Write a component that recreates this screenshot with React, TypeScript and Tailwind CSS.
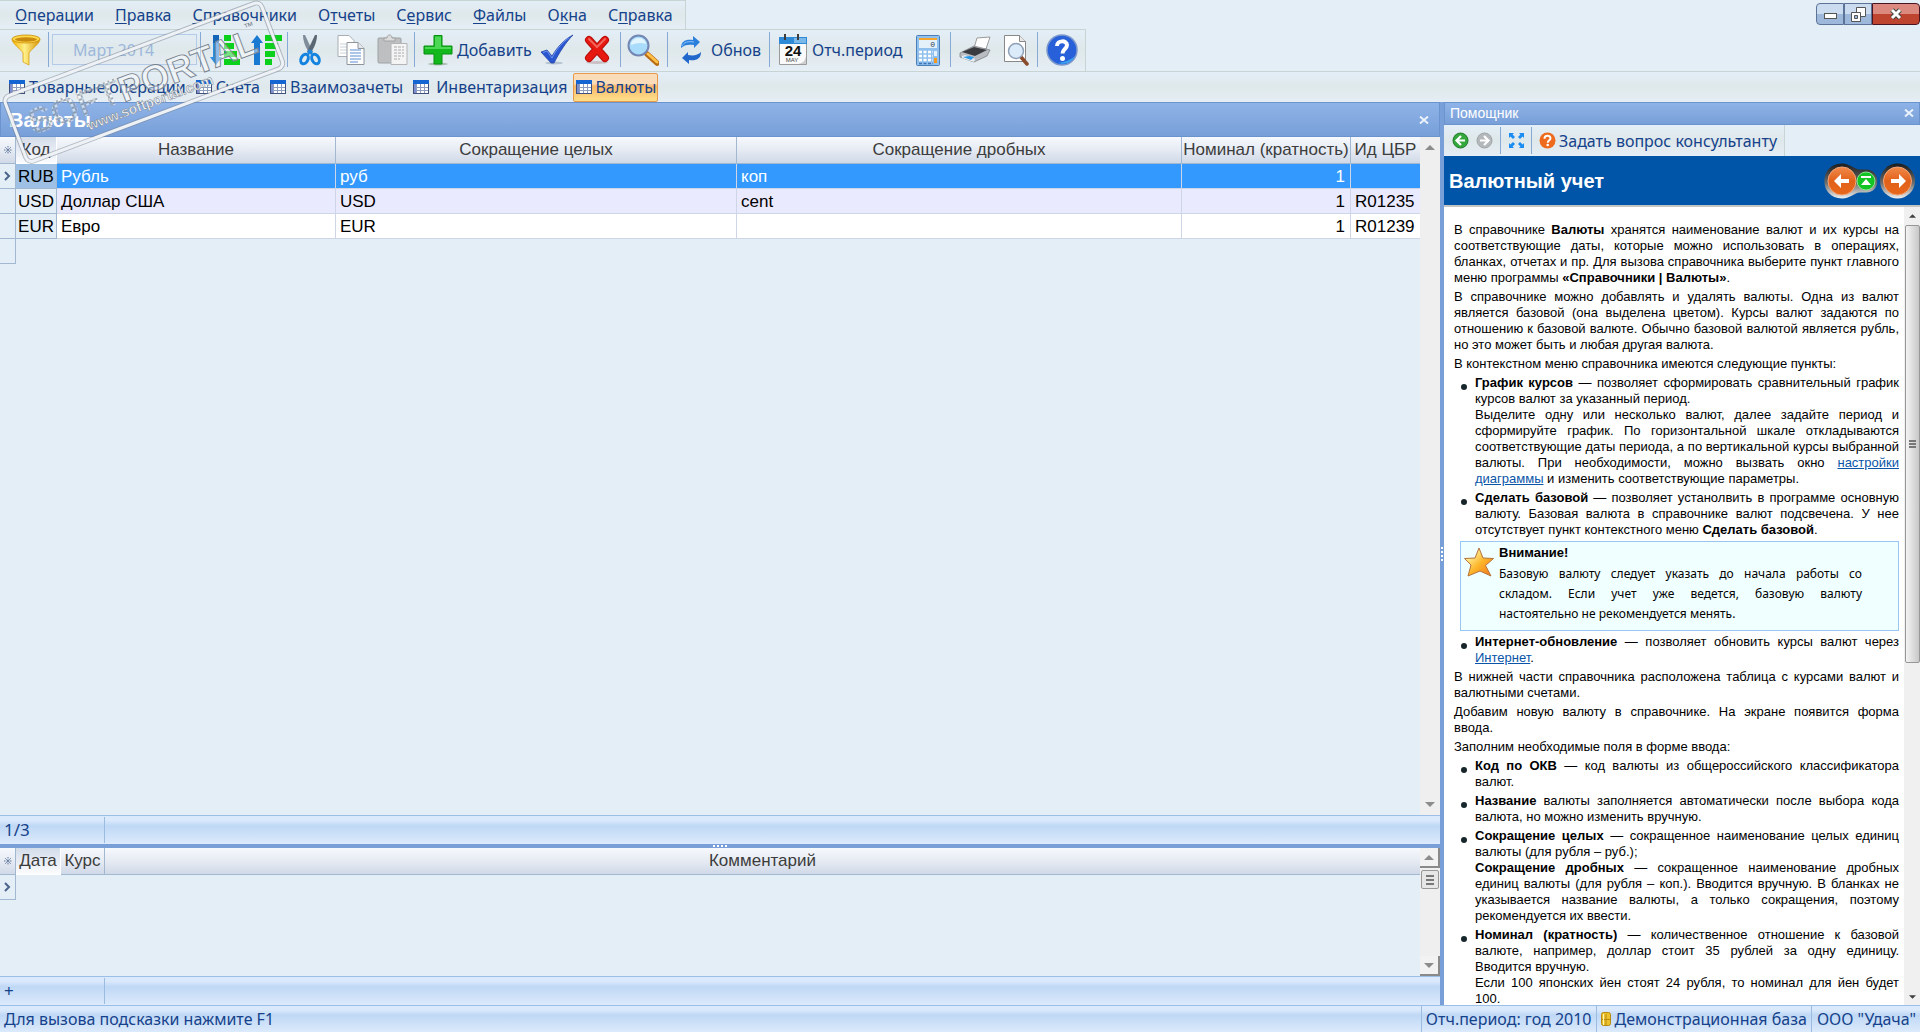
import React from "react";

type IconProps = { className?: string };

const BAR = "bg-linear-to-b from-[#e3eef7] via-[#dfe8ea] to-[#e6eef6]";
const HEAD = "bg-linear-to-b from-[#f6f9fd] via-[#e6ebf3] to-[#d0d9e8]";
const FOOT = "bg-linear-to-b from-[#dbe9fc] from-15% via-[#bfd8f5] via-35% to-[#dceafc]";
const TITLE = "border border-[#6b94cf] bg-linear-to-b from-[#8eb3e8] to-[#789fd8]";

const menu = [
  ["", "О", "перации"],
  ["", "П", "равка"],
  ["", "С", "правочники"],
  ["О", "т", "четы"],
  ["С", "е", "рвис"],
  ["", "Ф", "айлы"],
  ["О", "к", "на"],
  ["С", "п", "равка"],
];

const tabs = ["Товарные операции", "Счета", "Взаимозачеты", "Инвентаризация", "Валюты"];

const currencies = [
  { code: "RUB", name: "Рубль", whole: "руб", part: "коп", nominal: 1, id: "" },
  { code: "USD", name: "Доллар США", whole: "USD", part: "cent", nominal: 1, id: "R01235" },
  { code: "EUR", name: "Евро", whole: "EUR", part: "", nominal: 1, id: "R01239" },
];

const FunnelIcon = () => (
  <svg width="30" height="32" viewBox="0 0 30 32">
    <defs>
      <linearGradient id="gold" x1="0" x2="1">
        <stop offset="0" stopColor="#f5b100" />
        <stop offset=".45" stopColor="#fff08a" />
        <stop offset="1" stopColor="#d89400" />
      </linearGradient>
    </defs>
    <path d="M1 5c0 5 9 10 11 14v9l6 3V19c2-4 11-9 11-14z" fill="url(#gold)" stroke="#d99a00" strokeWidth=".7" />
    <ellipse cx="15" cy="5" rx="14" ry="4" fill="#ffd84a" stroke="#c98c00" strokeWidth=".8" />
    <ellipse cx="15" cy="5.500" rx="11" ry="2.200" fill="#c98a10" />
  </svg>
);

const SortDownIcon = () => (
  <svg width="32" height="32" viewBox="0 0 32 32">
    <path d="M4 1h6v22h3L7 31 1 23h3z" fill="#2f8be0" />
    <path d="M4 1h6v8H4z" fill="#1565b8" />
    <path d="M15 1h7v6h-7zM15 9h10v6H15zM15 17h13v6H15zM15 25h16v6H15z" fill="#0bd01c" />
  </svg>
);

const SortUpIcon = () => (
  <svg width="34" height="32" viewBox="0 0 34 32">
    <path d="M5 31h6V9h3L8 1 2 9h3z" fill="#1a7ad2" />
    <path d="M16 1h17v6H16zM16 9h13v6H16zM16 17h10v6H16zM16 25h7v6h-7z" fill="#0bd01c" />
  </svg>
);

const CutIcon = () => (
  <svg width="24" height="32" viewBox="0 0 24 32" fill="none">
    <path d="M5 1l2 0 8 17-3 2C8 14 5 8 5 1z" fill="#7f8c99" />
    <path d="M19 1l-2 0-8 17 3 2c4-6 7-12 7-19z" fill="#5a6672" />
    <circle cx="12" cy="18" r="2.500" fill="#1c86e0" />
    <ellipse cx="6.500" cy="25" rx="3.500" ry="5" transform="rotate(25 6.500 25)" stroke="#1483e0" strokeWidth="3" />
    <ellipse cx="17.500" cy="25" rx="3.500" ry="5" transform="rotate(-25 17.500 25)" stroke="#1483e0" strokeWidth="3" />
  </svg>
);

const CopyIcon = () => (
  <svg width="30" height="32" viewBox="0 0 30 32">
    <path d="M2 1.500h11l5 5v16H2z" fill="#fff" stroke="#a8aeb4" />
    <path d="M4 10h8M4 13h8M4 16h8M4 19h8" stroke="#ccd2d8" />
    <path d="M11 8.500h11l6 6v16H11z" fill="#fdfdfd" stroke="#8e959c" />
    <path d="M22 8.500v6h6" fill="#e4e8ec" stroke="#8e959c" />
    <path d="M14 16h11M14 19h11M14 22h11M14 25h11M14 28h8" stroke="#5b8fd6" />
  </svg>
);

const PasteIcon = () => (
  <svg width="32" height="32" viewBox="0 0 32 32">
    <rect x="1" y="4" width="23" height="25" rx="1" fill="#bdbfc1" stroke="#9fa2a4" />
    <path d="M7 7V4h3c0-4 5-4 5 0h3v3z" fill="#dcdcdc" stroke="#9fa2a4" />
    <path d="M14 9.500h16v21H14z" fill="#f4f4f4" stroke="#b2b4b6" />
    <path d="M17 13h10M17 16h10M17 19h10M17 22h10M17 25h6" stroke="#a8aaac" strokeDasharray="3 1" />
  </svg>
);

const AddIcon = () => (
  <svg width="30" height="32" viewBox="0 0 30 32">
    <ellipse cx="15" cy="30" rx="10" ry="1.500" fill="#a9bdb4" />
    <path d="M11 1.500h8V12h10v8H19v10h-8V20H1v-8h10z" fill="#12b81c" stroke="#078f10" />
    <path d="M12 2.500h6V13h10v2H2v-2h10z" fill="#4cd854" />
  </svg>
);

const CheckIcon = () => (
  <svg width="34" height="32" viewBox="0 0 34 32">
    <ellipse cx="14" cy="29" rx="9" ry="1.500" fill="#b4c2d2" />
    <path d="M1 18l6-2 5 6C18 12 25 5 33 1c-7 7-14 18-19 28h-3z" fill="#2a56d0" stroke="#1a3aa0" strokeWidth=".7" />
    <path d="M3 18.500l4-1.500 5 7C17 14 24 7 29 4" fill="none" stroke="#6f95ee" />
  </svg>
);

const DeleteIcon = () => (
  <svg width="28" height="30" viewBox="0 0 28 30">
    <ellipse cx="14" cy="27.500" rx="11" ry="1.500" fill="#c9bfc4" />
    <path d="M6 5l16 18M22 5L6 23" stroke="#b80f0a" strokeWidth="8" strokeLinecap="round" />
    <path d="M6 5l16 18M22 5L6 23" stroke="#e61810" strokeWidth="6" strokeLinecap="round" />
    <path d="M6 4l8 8 8-8" fill="none" stroke="#f2655a" strokeWidth="2" strokeLinecap="round" />
  </svg>
);

const FindIcon = () => (
  <svg width="32" height="32" viewBox="0 0 32 32">
    <path d="M20 20l10 9" stroke="#b86a10" strokeWidth="5.500" strokeLinecap="round" />
    <path d="M21 20l9 8" stroke="#ffc04a" strokeWidth="3" strokeLinecap="round" />
    <circle cx="11.500" cy="11.500" r="10" fill="#a9dcfa" stroke="#7487b4" strokeWidth="2" />
    <path d="M4 11c0-9 14-9 15-1-5-2-10-1-15 1z" fill="#e2f5ff" />
  </svg>
);

const RefreshIcon = () => (
  <svg width="24" height="28" viewBox="0 0 24 28">
    <path d="M2 12C2 5 7 3 14 4V0l7 6-6 6V9C9 8 5 9 2 12z" fill="#2b7fdc" />
    <path d="M22 16c0 7-5 9-12 8v4l-7-6 6-6v3c6 1 10 0 13-3z" fill="#2268cc" />
    <path d="M3 10c2-4 6-5 12-4" stroke="#8cc4fa" fill="none" />
  </svg>
);

const CalendarIcon = () => (
  <svg width="30" height="32" viewBox="0 0 30 32">
    <path d="M1.500 3.500h27v27h-27z" fill="#fafafa" stroke="#9a9a9a" />
    <path d="M1 3h28v7H1z" fill="#2e8ad6" />
    <path d="M16 4h12v5H16z" fill="#7ab8ea" />
    <path d="M28 22v8h-8c5-1 7-3 8-8z" fill="#cfcfcf" />
    <path d="M7 0v6M20 0v6" stroke="#3c3c3c" strokeWidth="2" />
    <text x="15" y="22" textAnchor="middle" fontFamily="Liberation Sans" fontSize="15" fontWeight="700" fill="#111">24</text>
    <text x="14" y="28" textAnchor="middle" fontFamily="Liberation Sans" fontSize="6" fill="#444">MAY</text>
  </svg>
);

const CalculatorIcon = () => (
  <svg width="24" height="32" viewBox="0 0 24 32">
    <rect x=".5" y="1.500" width="23" height="30" rx="1" fill="#8fc0ee" stroke="#4a7fb8" />
    <rect x="3" y="4" width="18" height="10" fill="#e4f0fa" />
    <path d="M3 4h18v2H3z" fill="#f5a52c" />
    <text x="19" y="13" textAnchor="end" fontFamily="Liberation Mono" fontSize="8" fill="#345">0</text>
    <path d="M3 18h14M3 22h14M3 26h14" stroke="#fff" strokeWidth="2.500" strokeDasharray="3 1.500" />
    <path d="M3 29.500h14" stroke="#3f74b4" strokeWidth="1.500" strokeDasharray="3 1.500" />
    <path d="M18 17h3v5h-3z" fill="#e8f2fc" />
    <path d="M18 24h3v5h-3z" fill="#f39a1e" />
  </svg>
);

const PrinterIcon = () => (
  <svg width="32" height="28" viewBox="0 0 32 28">
    <path d="M15 12l3-10 13-1-4 12z" fill="#fff" stroke="#9a9a9a" />
    <path d="M1 17l14-7 16 4-3 6-13 6-14-5z" fill="#b9bcc0" stroke="#75787c" strokeWidth=".7" />
    <path d="M3 16l12-5 13 3-12 6z" fill="#3a3b3e" />
    <path d="M3 20l3-1 10 4-1 3-12-4z" fill="#e8edf2" />
    <path d="M4 21l8 3 3-3-5-1z" fill="#2f9ae8" />
  </svg>
);

const PreviewIcon = () => (
  <svg width="26" height="32" viewBox="0 0 26 32">
    <path d="M1.500 1.500h15l6 6v20h-21z" fill="#fff" stroke="#888" />
    <path d="M16.500 1.500v6h6" fill="#e8e8e8" stroke="#888" />
    <path d="M18 23l6 7" stroke="#8a4a2c" strokeWidth="3.500" strokeLinecap="round" />
    <circle cx="13" cy="17" r="7.500" fill="#dcebfa" stroke="#8fa0b8" strokeWidth="1.500" />
  </svg>
);

const HelpIcon = () => (
  <svg width="32" height="32" viewBox="0 0 32 32">
    <circle cx="16" cy="16" r="15" fill="#2760d8" stroke="#7d98cc" strokeWidth="1.500" />
    <path d="M29 22A14 14 0 0 1 12 29c8-1 14-4 17-7z" fill="#3aa5f2" />
    <path d="M11 12c0-6 10-6 10-1 0 4-4.500 4-4.500 8.500" fill="none" stroke="#fff" strokeWidth="4" />
    <circle cx="16.500" cy="24.500" r="2.500" fill="#fff" />
  </svg>
);

const TableIcon = () => (
  <svg width="16" height="14" viewBox="0 0 16 14" className="shrink-0">
    <path d="M0 0h16v14H0z" fill="#fff" />
    <path d="M0 0h16v4H0z" fill="#1464d2" />
    <path d="M0 4h3v10H0z" fill="#7e8fd0" />
    <path d="M3.500 4v10M7.500 4v10M11.500 4v10M3 7.500h13M3 10.500h13" stroke="#8f9dbd" />
    <path d="M0 13.500h16M15.500 4v10M.5 4v10" stroke="#40507c" />
  </svg>
);

const RoundArrow = ({ color, dark, flip }: { color: string; dark: string; flip?: boolean }) => (
  <svg width="17" height="17" viewBox="0 0 17 17" className={flip ? "-scale-x-100" : ""}>
    <circle cx="8.500" cy="8.500" r="7.500" fill={color} stroke={dark} />
    <path d="M9 4L4.500 8.500 9 13M5 8.500h8" fill="none" stroke="#fff" strokeWidth="2.200" />
  </svg>
);

const ExpandIcon = () => (
  <svg width="15" height="15" viewBox="0 0 15 15" fill="#1b8cf2">
    <path d="M0 0h5L3.600 1.400 6 4 4 6 1.400 3.600 0 5zM15 0v5l-1.400-1.400L11 6 9 4l2.400-2.600L10 0zM0 15v-5l1.400 1.400L4 9l2 2-2.400 2.600L5 15zM15 15h-5l1.400-1.400L9 11l2-2 2.600 2.400L15 10z" />
  </svg>
);

const AskIcon = () => (
  <svg width="17" height="17" viewBox="0 0 17 17">
    <circle cx="8.500" cy="8.500" r="8" fill="#ee6a1c" />
    <path d="M5.500 6.800c0-4 6-4 6-.5 0 2.200-2.800 2-2.800 4.500" fill="none" stroke="#fff" strokeWidth="2" />
    <circle cx="8.700" cy="13" r="1.300" fill="#fff" />
  </svg>
);

const HelpNav = () => (
  <svg width="92" height="36" viewBox="0 0 92 36">
    <defs>
      <linearGradient id="rim" x1="0" y1="0" x2="0" y2="1">
        <stop offset="0" stopColor="#1c1c1c" />
        <stop offset=".55" stopColor="#6b6b6b" />
        <stop offset="1" stopColor="#f0f0f0" />
      </linearGradient>
      <linearGradient id="orange" x1="0" y1="0" x2="0" y2="1">
        <stop offset="0" stopColor="#f08a4a" />
        <stop offset=".5" stopColor="#e2611a" />
        <stop offset="1" stopColor="#e8671a" />
      </linearGradient>
    </defs>
    <path d="M18 .5c8 0 12 6 18 6h6c15 0 15 23 0 23h-6c-6 0-9 6-18 6C-5.500 35.500-5.500.5 18 .5z" fill="url(#rim)" />
    <circle cx="73.500" cy="18" r="17.500" fill="url(#rim)" />
    <circle cx="18" cy="18" r="14" fill="url(#orange)" stroke="#f4a57a" />
    <circle cx="73.500" cy="18" r="14" fill="url(#orange)" stroke="#f4a57a" />
    <circle cx="42" cy="18" r="9" fill="#12c424" stroke="#8ae892" />
    <path d="M10 18l7-7v5h8v4h-8v5z" fill="#fff" />
    <path d="M82 18l-7-7v5h-8v4h8v5z" fill="#fff" />
    <path d="M37 13h10v2H37zM42 16l5 6H37z" fill="#fff" />
  </svg>
);

const StarIcon = () => (
  <svg width="30" height="30" viewBox="0 0 30 30" className="mt-[2px] shrink-0">
    <defs>
      <linearGradient id="star" x1="0" y1="0" x2="1" y2="1">
        <stop offset=".2" stopColor="#fff2a0" />
        <stop offset=".55" stopColor="#fdb52a" />
        <stop offset="1" stopColor="#f0701a" />
      </linearGradient>
    </defs>
    <path d="M15 1l4 10 10.500.5-8 7L27 29l-11-5L4 29l3-11L.5 11.500 11 11z" fill="url(#star)" stroke="#b5723a" />
  </svg>
);

const DatabaseIcon = () => (
  <svg width="10" height="14" viewBox="0 0 10 14" className="shrink-0">
    <rect x=".5" y=".5" width="9" height="13" rx="2" fill="#ecc22c" stroke="#b88a10" />
    <path d="M1 7.500h8M5 2v11" stroke="#b88a10" />
    <path d="M2.500 2v11" stroke="#fff3b0" />
  </svg>
);

const CloseIcon = ({ className }: IconProps) => (
  <svg width="10" height="8" viewBox="0 0 10 8" className={className}>
    <path d="M1 .5l8 7M9 .5l-8 7" stroke="#eaf2fc" strokeWidth="2" />
  </svg>
);

const Pointer = () => (
  <svg width="7" height="10" viewBox="0 0 7 10" className="mx-auto">
    <path d="M1 1l4 4-4 4" fill="none" stroke="#4a648c" strokeWidth="2" />
  </svg>
);

const Asterisk = () => (
  <svg width="8" height="8" viewBox="0 0 8 8" className="mx-auto" stroke="#62789c">
    <path d="M4 0v8M0 4h8M1 1l6 6M7 1L1 7" strokeDasharray="1 .5" />
  </svg>
);

const Arrow = ({ down, small }: { down?: boolean; small?: boolean }) => (
  <svg
    width={small ? 7 : 10}
    height={small ? 4 : 5}
    viewBox="0 0 10 5"
    className={down ? "rotate-180" : ""}
  >
    <path d="M0 5l5-5 5 5z" fill={small ? "#404040" : "#8c8c8c"} />
  </svg>
);

const Watermark = () => (
  <svg
    width="300"
    height="170"
    viewBox="0 0 300 170"
    className="pointer-events-none absolute top-0 left-0"
    aria-hidden="true"
  >
    <defs>
      <pattern id="dots" width="5" height="5" patternUnits="userSpaceOnUse">
        <rect x=".5" y=".5" width="4" height="4" rx="1" fill="#fff" fillOpacity=".5" stroke="#7d8894" strokeWidth=".7" />
      </pattern>
    </defs>
    <g transform="translate(2 97) rotate(-20.600)">
      <rect x="1" y="1" width="274" height="70" rx="6" fill="none" stroke="#77818d" strokeWidth="5" opacity=".5" />
      <rect x="1" y="1" width="274" height="70" rx="6" fill="none" stroke="#eef2f6" strokeWidth="3" />
      <text x="16" y="47" fontFamily="Liberation Sans" fontSize="36" fontWeight="700" fill="url(#dots)">
        SOFT
      </text>
      <text
        x="112"
        y="48"
        fontFamily="Liberation Sans"
        fontSize="36"
        fontWeight="700"
        fill="#ffffff"
        fillOpacity=".45"
        stroke="#78828e"
        strokeWidth=".9"
      >
        PORTAL
      </text>
      <text x="251" y="24" fontFamily="Liberation Sans" fontSize="10" fill="#77818d">
        ™
      </text>
      <text
        x="70"
        y="62"
        fontFamily="Liberation Sans"
        fontSize="14"
        fontWeight="700"
        fill="#f2f5f8"
        stroke="#77818d"
        strokeWidth=".5"
      >
        www.softportal.com
      </text>
    </g>
  </svg>
);

const Separator = () => <div className="my-[2px] w-px shrink-0 bg-[#86a9d6]" />;

type ToolProps = { label: string; className: string; children: React.ReactNode };

const Tool = ({ label, className, children }: ToolProps) => (
  <button
    type="button"
    aria-label={label}
    className={`flex shrink-0 items-center whitespace-nowrap ${className}`}
  >
    {children}
  </button>
);

const Toolbar = () => (
  <div className={`flex h-[42px] w-[1086px] border-t border-r border-[#c8d4d4] pb-[2px] text-base ${BAR}`}>
    <Tool label="Фильтр" className="w-12 justify-center pl-1"><FunnelIcon /></Tool>
    <Separator />
    <div className="flex w-[151px] shrink-0 items-center px-[3px]">
      <select
        aria-label="Период"
        disabled
        className="h-[31px] w-full appearance-none border border-[#b4cbe8] pl-5 text-[#9db8dc] opacity-100"
      >
        <option>Март 2014</option>
      </select>
    </div>
    <Separator />
    <Tool label="По убыванию" className="w-[43px] justify-center pl-1"><SortDownIcon /></Tool>
    <Tool label="По возрастанию" className="w-[43px] justify-center"><SortUpIcon /></Tool>
    <Separator />
    <Tool label="Вырезать" className="w-[43px] justify-center"><CutIcon /></Tool>
    <Tool label="Копировать" className="w-10 justify-center"><CopyIcon /></Tool>
    <Tool label="Вставить" className="w-[43px] justify-center"><PasteIcon /></Tool>
    <Separator />
    <Tool label="Добавить" className="w-[121px] gap-1 pl-2"><AddIcon />Добавить</Tool>
    <Tool label="Сохранить" className="w-[41px] justify-center"><CheckIcon /></Tool>
    <Tool label="Удалить" className="w-[43px] pl-[6px]"><DeleteIcon /></Tool>
    <Separator />
    <Tool label="Найти" className="w-[46px] pl-[6px]"><FindIcon /></Tool>
    <Separator />
    <Tool label="Обнов" className="w-[101px] gap-2 pl-[11px]"><RefreshIcon />Обнов</Tool>
    <Separator />
    <Tool label="Отч.период" className="w-[138px] gap-1 pl-2"><CalendarIcon />Отч.период</Tool>
    <Tool label="Калькулятор" className="w-[42px] pl-2"><CalculatorIcon /></Tool>
    <Separator />
    <Tool label="Печать" className="w-[44px] justify-center pl-1"><PrinterIcon /></Tool>
    <Tool label="Просмотр" className="w-[42px] justify-center"><PreviewIcon /></Tool>
    <Separator />
    <Tool label="Справка" className="w-[46px] justify-center pl-[2px]"><HelpIcon /></Tool>
  </div>
);

const WindowButtons = () => (
  <div className="flex h-[22px] pt-[3px]">
    <button type="button" aria-label="Свернуть" className="flex h-[22px] w-7 items-center justify-center rounded-l-sm border border-[#5c7398] bg-linear-to-b from-[#cbdcf0] from-50% to-[#9db8da] to-50%">
      <span className="mt-1 h-[6px] w-[13px] border border-[#555] bg-white" />
    </button>
    <button type="button" aria-label="Восстановить" className="flex h-[22px] w-7 items-center justify-center border border-[#5c7398] bg-linear-to-b from-[#cbdcf0] from-50% to-[#9db8da] to-50%">
      <svg width="15" height="15" viewBox="0 0 15 15" fill="#fff" stroke="#555">
        <path d="M5.500.5h9v9h-9z" />
        <path d="M.5 5.500h9v9h-9z" />
        <path d="M3.500 8.500h3v3h-3z" fill="#9db8da" />
      </svg>
    </button>
    <button type="button" aria-label="Закрыть" className="flex h-[22px] w-12 items-center justify-center rounded-r-sm border border-[#4a1420] bg-linear-to-b from-[#dc8a80] from-50% to-[#bf4430] to-50%">
      <svg width="14" height="12" viewBox="0 0 14 12">
        <path d="M3 2l8 8M11 2l-8 8" stroke="#444" strokeWidth="5" />
        <path d="M3 2l8 8M11 2l-8 8" stroke="#fff" strokeWidth="3" />
      </svg>
    </button>
  </div>
);

const th = `h-[27px] border-r border-b border-[#a2b8d0] p-0 text-center font-normal whitespace-nowrap text-[#3c3c3c] ${HEAD}`;
const thActive =
  "h-[27px] border-r border-b border-white bg-linear-to-b from-[#d3dcea] to-[#fbfcfe] p-0 text-center font-normal text-[#3c3c3c]";
const gutter = "border-r border-b border-[#a2b8d0] p-0";

const CurrencyTable = () => (
  <table className="w-full table-fixed border-separate border-spacing-0 text-[17px] leading-[22px] text-black">
    <colgroup>
      <col className="w-4" />
      <col className="w-[41px]" />
      <col className="w-[279px]" />
      <col className="w-[401px]" />
      <col />
      <col className="w-[169px]" />
      <col className="w-[69px]" />
    </colgroup>
    <thead>
      <tr>
        <th className={th}><Asterisk /></th>
        <th className={thActive}>Код</th>
        <th className={th}>Название</th>
        <th className={th}>Сокращение целых</th>
        <th className={th}>Сокращение дробных</th>
        <th className={th}>Номинал (кратность)</th>
        <th className={`${th} border-r-0`}>Ид ЦБР</th>
      </tr>
    </thead>
    <tbody>
      {currencies.map((row, i) => {
        const cell = `border-r border-b border-[#ced5e6] pt-[2px] pr-0 pb-0 pl-1 ${
          i === 0 ? "bg-[#3399ff] text-white" : i === 1 ? "bg-[#eaeafe]" : "bg-white"
        }`;
        return (
          <tr key={row.code}>
            <td className={gutter}>{i === 0 && <Pointer />}</td>
            <td
              className={`border-r border-b border-[#a2b8d0] px-0 pt-[2px] pb-0 text-center ${
                i === 0 ? "bg-[#9dc0e4]" : "bg-[#e3eef7]"
              }`}
            >
              {row.code}
            </td>
            <td className={cell}>{row.name}</td>
            <td className={cell}>{row.whole}</td>
            <td className={cell}>{row.part}</td>
            <td className={`${cell} pr-[5px] text-right`}>{row.nominal}</td>
            <td className={`${cell} border-r-0`}>{row.id}</td>
          </tr>
        );
      })}
      <tr>
        <td className={`${gutter} h-[25px]`} />
      </tr>
    </tbody>
  </table>
);

const RatesTable = () => (
  <table className="w-full table-fixed border-separate border-spacing-0 text-[17px] leading-[22px]">
    <colgroup>
      <col className="w-4" />
      <col className="w-[45px]" />
      <col className="w-11" />
      <col />
    </colgroup>
    <thead>
      <tr>
        <th className={th}><Asterisk /></th>
        <th className={thActive}>Дата</th>
        <th className={th}>Курс</th>
        <th className={`${th} border-r-0`}>Комментарий</th>
      </tr>
    </thead>
    <tbody>
      <tr>
        <td className={`${gutter} h-[25px]`}><Pointer /></td>
      </tr>
    </tbody>
  </table>
);

const Footer = ({ children }: { children: string }) => (
  <div className={`flex h-[29px] shrink-0 border-t border-[#9cbfe8] font-['Noto_Sans',sans-serif] text-[17px] text-[#15428b] ${FOOT}`}>
    <div className="my-px flex w-[105px] items-center border-r border-[#9cbbe0] pl-1">{children}</div>
  </div>
);

const Item = ({ children }: { children: React.ReactNode }) => (
  <li className="mb-[3px] flex gap-2">
    <span className="mt-[9px] size-[6px] shrink-0 rounded-full bg-[#16262a]" />
    <div className="flex-1">{children}</div>
  </li>
);

const HelpText = () => (
  <div className="min-w-0 flex-1 overflow-hidden pt-[15px] pr-[5px] pl-[10px] text-justify text-[13px] leading-4 text-black">
    <p className="mb-[3px]">
      В справочнике <b>Валюты</b> хранятся наименование валют и их курсы на соответствующие даты,
      которые можно использовать в операциях, бланках, отчетах и пр. Для вызова справочника
      выберите пункт главного меню программы <b>«Справочники | Валюты»</b>.
    </p>
    <p className="mb-[3px]">
      В справочнике можно добавлять и удалять валюты. Одна из валют является базовой (она выделена
      цветом). Курсы валют задаются по отношению к базовой валюте. Обычно базовой валютой является
      рубль, но это может быть и любая другая валюта.
    </p>
    <p className="mb-[3px]">В контекстном меню справочника имеются следующие пункты:</p>
    <ul className="pl-[7px]">
      <Item>
        <b>График курсов</b> — позволяет сформировать сравнительный график курсов валют за
        указанный период.
        <br />
        Выделите одну или несколько валют, далее задайте период и сформируйте график. По
        горизонтальной шкале откладываются соответствующие даты периода, а по вертикальной курсы
        выбранной валюты. При необходимости, можно вызвать окно{" "}
        <a href="#chart" className="text-[#0a55a8] underline">настройки диаграммы</a> и изменить
        соответствующие параметры.
      </Item>
      <Item>
        <b>Сделать базовой</b> — позволяет устанолвить в программе основную валюту. Базовая валюта
        в справочнике валют подсвечена. У нее отсутствует пункт контекстного меню{" "}
        <b>Сделать базовой</b>.
      </Item>
    </ul>
    <div className="mb-[3px] ml-[6px] flex h-[90px] gap-[5px] border border-[#98c8f2] bg-[#f0ffff] pt-[3px] pr-9 pl-[3px]">
      <StarIcon />
      <div className="flex-1">
        <b className="block">Внимание!</b>
        <p className="mt-[3px] font-['Noto_Sans'] text-[12px] leading-5">
          Базовую валюту следует указать до начала работы со складом. Если учет уже ведется,
          базовую валюту настоятельно не рекомендуется менять.
        </p>
      </div>
    </div>
    <ul className="pl-[7px]">
      <Item>
        <b>Интернет-обновление</b> — позволяет обновить курсы валют через{" "}
        <a href="#internet" className="text-[#0a55a8] underline">Интернет</a>.
      </Item>
    </ul>
    <p className="mb-[3px]">
      В нижней части справочника расположена таблица с курсами валют и валютными счетами.
    </p>
    <p className="mb-[3px]">Добавим новую валюту в справочнике. На экране появится форма ввода.</p>
    <p className="mb-[3px]">Заполним необходимые поля в форме ввода:</p>
    <ul className="pl-[7px]">
      <Item>
        <b>Код по ОКВ</b> — код валюты из общероссийского классификатора валют.
      </Item>
      <Item>
        <b>Название</b> валюты заполняется автоматически после выбора кода валюта, но можно
        изменить вручную.
      </Item>
      <Item>
        <b>Сокращение целых</b> — сокращенное наименование целых единиц валюты (для рубля – руб.);
        <br />
        <b>Сокращение дробных</b> — сокращенное наименование дробных единиц валюты (для рубля –
        коп.). Вводится вручную. В бланках не указывается название валюты, а только сокращения,
        поэтому рекомендуется их ввести.
      </Item>
      <Item>
        <b>Номинал (кратность)</b> — количественное отношение к базовой валюте, например, доллар
        стоит 35 рублей за одну единицу. Вводится вручную.
        <br />
        Если 100 японских йен стоят 24 рубля, то номинал для йен будет 100.
      </Item>
    </ul>
  </div>
);

const Helper = () => (
  <aside className="flex w-[476px] shrink-0 flex-col bg-white">
    <div className={`flex h-[23px] shrink-0 items-center justify-between px-[5px] pb-px text-sm text-white ${TITLE}`}>
      Помощник
      <button type="button" aria-label="Закрыть помощник"><CloseIcon /></button>
    </div>
    <div className="flex h-[31px] shrink-0 bg-[#e3eef7]">
      <div className={`flex border-r border-[#c8d4d4] text-[#15428b] ${BAR}`}>
        <Tool label="Назад" className="w-8 justify-center"><RoundArrow color="#34a83c" dark="#1c7a26" /></Tool>
        <Tool label="Вперед" className="w-6 justify-start"><RoundArrow color="#b4b8ba" dark="#a0a4a6" flip /></Tool>
        <Separator />
        <Tool label="Развернуть" className="w-[30px] justify-center"><ExpandIcon /></Tool>
        <Separator />
        <Tool label="Задать вопрос консультанту" className="gap-[3px] px-[7px] font-['Noto_Sans'] text-base">
          <AskIcon />Задать вопрос консультанту
        </Tool>
      </div>
    </div>
    <div className="flex h-[49px] shrink-0 items-center justify-between bg-[#0055a8] pr-1 pl-[5px]">
      <h2 className="text-xl font-bold text-white">Валютный учет</h2>
      <HelpNav />
    </div>
    <div className="flex min-h-0 flex-1 border-t-2 border-[#c4c4c4]">
      <HelpText />
      <div className="flex w-4 shrink-0 flex-col items-center bg-[#f0f0f0]">
        <div className="flex h-[18px] items-center"><Arrow small /></div>
        <div className="flex h-[438px] w-[15px] flex-col items-center justify-center gap-px rounded-xs border border-[#979797] bg-linear-to-r from-[#f4f4f4] to-[#c8c8c8]">
          <span className="h-[2px] w-[7px] bg-[#777]" />
          <span className="h-[2px] w-[7px] bg-[#777]" />
          <span className="h-[2px] w-[7px] bg-[#777]" />
        </div>
        <div className="mt-auto flex h-4 items-center"><Arrow small down /></div>
      </div>
    </div>
  </aside>
);

export default function App() {
  return (
    <div className="relative flex h-screen flex-col overflow-hidden bg-[#e3eef7] font-['Liberation_Sans',Arial,sans-serif]">
      <header className="shrink-0 font-['Noto_Sans','Open_Sans',sans-serif] text-[#15428b]">
        <div className="flex justify-between">
          <nav className={`flex h-[29px] items-center gap-px border-t border-r border-[#c8d4d4] pr-[2px] pl-[5px] text-base ${BAR}`}>
            {menu.map(([before, key, after]) => (
              <a key={before + key + after} href="#menu" className="px-[10px]">
                {before}
                <span className="underline underline-offset-2">{key}</span>
                {after}
              </a>
            ))}
          </nav>
          <WindowButtons />
        </div>
        <Toolbar />
        <div className={`flex h-[31px] items-center gap-[2px] border-t border-[#c8d4d4] pl-[5px] text-base ${BAR}`}>
          {tabs.map((tab) => (
            <button
              key={tab}
              type="button"
              className={`flex h-[29px] items-center pl-1 whitespace-nowrap ${
                tab === "Валюты"
                  ? "gap-[3px] rounded-xs border border-[#e89a4a] bg-linear-to-b from-[#fbdcb8] from-35% via-[#f9b868] via-45% to-[#fde08c] pr-px pl-[2px]"
                  : tab === "Инвентаризация"
                    ? "gap-[7px] pr-1"
                    : "gap-1 pr-1"
              }`}
            >
              <TableIcon />
              {tab}
            </button>
          ))}
        </div>
      </header>

      <div className="flex min-h-0 flex-1">
        <main className="flex min-w-0 flex-1 flex-col">
          <div className={`flex h-[35px] shrink-0 items-center justify-between pr-[10px] pl-2 ${TITLE}`}>
            <h1 className="text-xl font-bold text-white">Валюты</h1>
            <button type="button" aria-label="Закрыть окно"><CloseIcon /></button>
          </div>
          <div className="flex min-h-0 flex-1">
            <div className="min-w-0 flex-1"><CurrencyTable /></div>
            <div className="flex w-5 flex-col items-center justify-between bg-[#efefef] py-2">
              <Arrow />
              <Arrow down />
            </div>
          </div>
          <Footer>1/3</Footer>
          <div className="flex h-1 shrink-0 items-center justify-center gap-[2px] bg-[#789fd8]">
            <span className="size-[2px] bg-white" />
            <span className="size-[2px] bg-white" />
            <span className="size-[2px] bg-white" />
            <span className="size-[2px] bg-white" />
          </div>
          <div className="flex h-32 shrink-0">
            <div className="min-w-0 flex-1"><RatesTable /></div>
            <div className="flex w-5 flex-col items-center bg-[#efefef]">
              <div className="flex h-5 w-full items-center justify-center border-r-2 border-b-2 border-[#8a8a8a] bg-[#f2f2f2]"><Arrow /></div>
              <div className="mt-[2px] flex h-[19px] w-[18px] flex-col items-center justify-center gap-[2px] rounded-xs border border-[#979797] bg-[#e6e6e6]">
                <span className="h-[2px] w-2 bg-[#777]" />
                <span className="h-[2px] w-2 bg-[#777]" />
                <span className="h-[2px] w-2 bg-[#777]" />
              </div>
              <div className="mt-auto flex h-5 w-full items-center justify-center border-r-2 border-b-2 border-[#8a8a8a] bg-[#f2f2f2]"><Arrow down /></div>
            </div>
          </div>
          <Footer>+</Footer>
        </main>
        <div className="flex w-1 shrink-0 flex-col items-center justify-center gap-[2px] bg-[#789fd8]">
          <span className="size-[2px] bg-white" />
          <span className="size-[2px] bg-white" />
          <span className="size-[2px] bg-white" />
          <span className="size-[2px] bg-white" />
        </div>
        <Helper />
      </div>

      <footer className={`flex h-[27px] shrink-0 items-center justify-between border-t border-[#9cbfe8] pl-1 font-['Noto_Sans',sans-serif] text-base whitespace-nowrap text-[#15428b] ${FOOT}`}>
        <span>Для вызова подсказки нажмите F1</span>
        <div className="flex h-full">
          <span className="flex items-center border-l border-[#9cbbe0] px-1">Отч.период: год 2010</span>
          <span className="flex items-center gap-1 border-l border-[#9cbbe0] px-1"><DatabaseIcon />Демонстрационная база</span>
          <span className="flex items-center border-l border-[#9cbbe0] pr-1 pl-[5px]">ООО "Удача"</span>
        </div>
      </footer>

      <Watermark />
    </div>
  );
}
